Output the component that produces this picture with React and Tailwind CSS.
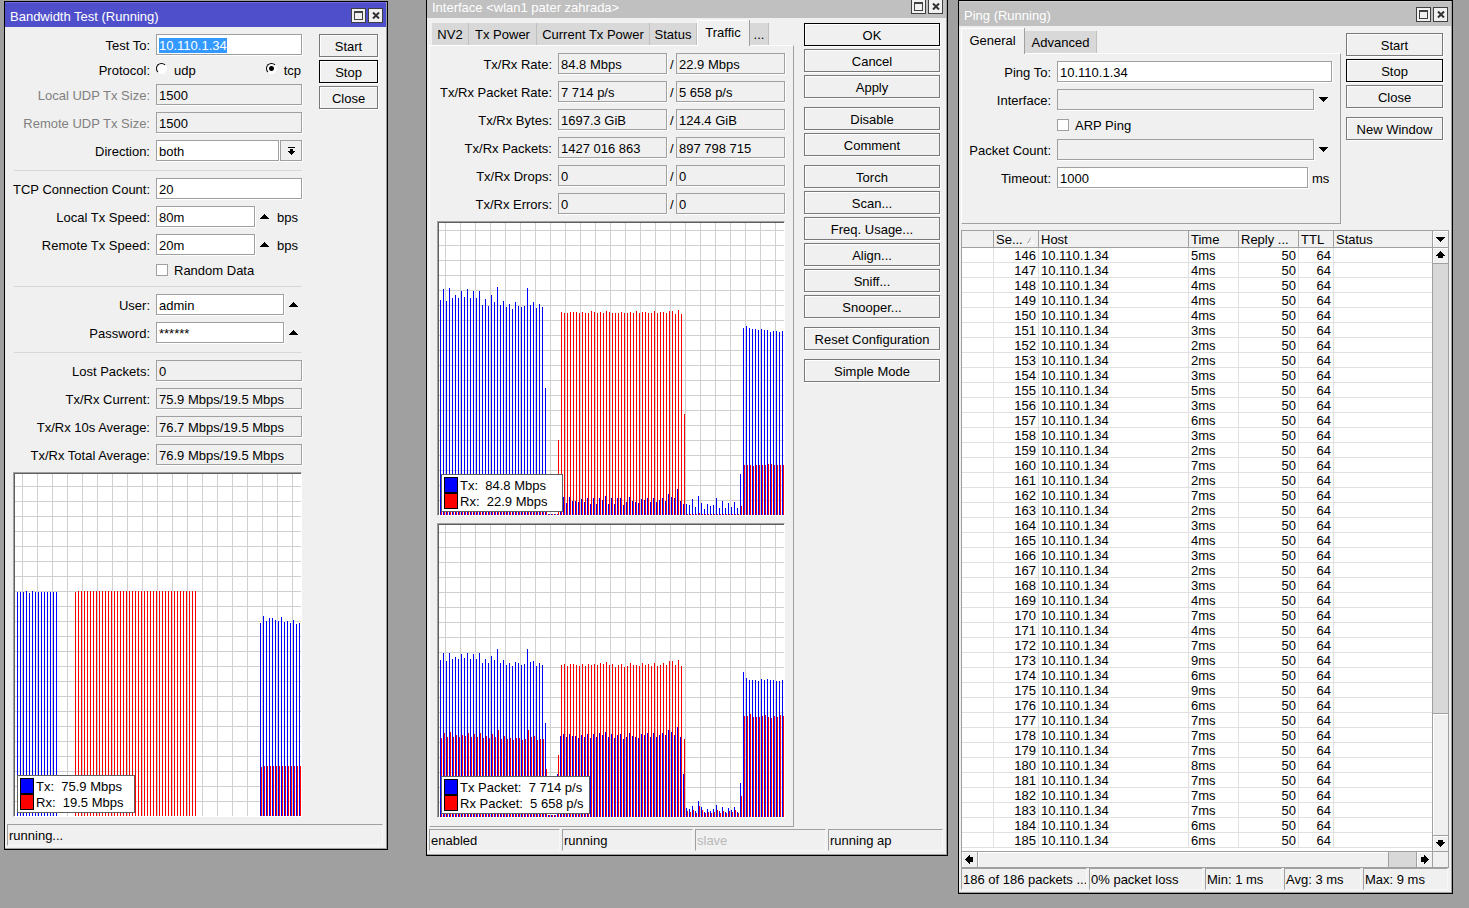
import { useEffect, useRef } from 'react';

const fill = (n, value) => Array(n).fill(value);

// one sample per second, values are bar heights in pixels
const bandwidthTx = [
    224, 224, 224, 225, 223, 225, ...fill(8, 224), ...fill(67, 0),
    193, 200, 195, 198, 198, 196, 195, 199, 194, 195, 193, 196, 192, 193,
];
const bandwidthRx = [...fill(19, 0), 224, ...fill(40, 225), ...fill(21, 0), 49, ...fill(13, 50)];

const rateTx = [
    215, 226, 214, 227, 217, 220, 217, 224, 218, 226, 217, 224, 217, 224, 210, 216, 209, 220, 213, 228,
    210, 214, 208, 211, 206, 213, 209, 208, 209, 227, 210, 213, 207, 211, 208, 127, 1, 1, 1, 1,
    13, 18, 12, 18, 14, 14, 13, 16, 13, 17, 11, 17, 11, 17, 15, 19, 11, 17, 11, 17, 17,
    10, 13, 18, 14, 13, 12, 16, 15, 17, 13, 17, 13, 15, 17, 14, 21, 18, 17, 26, 14,
    11, 11, 10, 16, 8, 19, 12, 6, 11, 9, 10, 17, 7, 14, 7, 12, 8, 13, 7, 41,
    187, 189, 187, 186, 186, 185, 186, 185, 185, 183, 184, 184, 183, 184,
];
const rateRx = [
    ...fill(36, 3), 1, 1, 1, 75,
    203, 202, 202, 203, 203, 203, 202, 203, 202, 202, 204, 203, 202, 203, 202, 204, 203, 202, 202, 202,
    203, 202, 202, 203, 202, 204, 202, 203, 203, 202, 202, 204, 202, 203, 203, 202, 204, 204, 201, 205,
    201, 101, ...fill(4, 1), 2, ...fill(13, 1), 9,
    50, 50, 50, 49, 50, 50, 50, 50, 51, 51, 50, 50, 50, 50,
];

const packetTx = [
    157, 164, 156, 164, 158, 160, 158, 163, 159, 164, 158, 163, 158, 164, 154, 158, 154, 161, 157, 168,
    154, 157, 152, 154, 151, 155, 154, 152, 153, 168, 155, 156, 151, 154, 152, 94, 2, 2, 2, 43,
    81, 83, 80, 83, 81, 81, 79, 82, 80, 83, 79, 83, 80, 84, 82, 85, 80, 83, 79, 82,
    83, 78, 80, 84, 81, 80, 79, 83, 82, 84, 80, 84, 80, 82, 84, 82, 87, 85, 82, 90,
    80, 43, 9, 8, 11, 6, 16, 10, 5, 8, 6, 8, 12, 6, 10, 5, 9, 7, 10, 5, 34,
    145, 139, 137, 137, 137, 136, 138, 137, 138, 137, 137, 136, 136, 137,
];
const packetRx = [
    79, 84, 80, 85, 80, 82, 80, 82, 81, 84, 80, 83, 80, 84, 79, 81, 79, 83, 80, 87,
    78, 81, 78, 79, 77, 79, 79, 77, 78, 87, 80, 81, 77, 78, 78, 48, 2, 2, 2, 62,
    152, 153, 151, 153, 153, 152, 151, 153, 151, 153, 152, 153, 152, 154, 153, 155, 152, 153, 150, 152,
    153, 150, 151, 154, 152, 152, 151, 154, 152, 153, 151, 154, 151, 152, 154, 152, 156, 156, 152, 157,
    151, 78, 6, 5, 7, 4, 11, 7, 4, 5, 4, 5, 7, 4, 6, 4, 6, 5, 7, 4, 21,
    101, 101, 103, 100, 100, 100, 101, 102, 100, 99, 101, 100, 102, 101,
];

// reply times in ms, starting with seq 146
const pingTimes = [
    5, 4, 4, 4, 4, 3, 2, 2, 3, 5, 3, 6, 3, 2, 7, 2, 7, 2, 3, 4,
    3, 2, 3, 4, 7, 4, 7, 9, 6, 9, 6, 7, 7, 7, 8, 7, 7, 7, 6, 6,
];

const Triangle = ({ down }) => (
    <svg width="9" height="5" viewBox="0 0 9 5" shapeRendering="crispEdges" aria-hidden="true">
        <path d={down ? 'M0 0h9v1H8v1H7v1H6v1H5v1H4V4H3V3H2V2H1V1H0z' : 'M0 5h9V4H8V3H7V2H6V1H5V0H4v1H3v1H2v1H1v1H0z'} />
    </svg>
);

const arrowPaths = {
    up: 'M4 0h1v1h1v1h1v1h1v1h1v1H7v2H2V5H0V4h1V3h1V2h1V1h1z',
    down: 'M4 8h1V7h1V6h1V5h1V4h1V3H7V1H2v2H0v1h1v1h1v1h1v1h1z',
    left: 'M0 4h1V3h1V2h1V1h1V0h1v2h3v5H5v2H4V8H3V7H2V6H1V5H0z',
    right: 'M9 4H8V3H7V2H6V1H5V0H4v2H1v5h3v2h1V8h1V7h1V6h1V5h1z',
};

const ScrollButton = ({ dir, className }) => (
    <button type="button" aria-label={`Scroll ${dir}`} className={`flex items-center justify-center bg-[#f0f0f0] border-[#a0a0a0] shadow-[inset_1px_1px_0_#fff] ${className}`}>
        <svg width="9" height="9" viewBox="0 0 9 9" shapeRendering="crispEdges" aria-hidden="true">
            <path d={arrowPaths[dir]} />
        </svg>
    </button>
);

const ArrowButton = ({ down, label }) => (
    <button type="button" aria-label={label} className="flex h-[21px] w-[18px] items-center justify-center">
        <Triangle down={down} />
    </button>
);

const Window = ({ title, active, className, children }) => (
    <section className={`absolute border border-black bg-[#f0f0f0] shadow-[inset_-1px_-1px_0_#a0a0a0] ${className}`}>
        <header className={`flex h-[25px] items-center gap-[2px] border-t pl-[5px] pr-[3px] mr-px text-white ${active ? 'bg-[#4f4fcc] border-[#6c6ce0]' : 'bg-[#c0c0c0] border-[#d0d0d0]'}`}>
            <h2 className="flex-1 pt-[3px]">{title}</h2>
            <button type="button" aria-label="Maximize" className="flex h-[15px] w-[15px] items-center justify-center border border-[#404040] bg-[#f0f0f0]">
                <svg width="9" height="9" viewBox="0 0 9 9" shapeRendering="crispEdges">
                    <path d="M0 0h9v9H0zM1 2v6h7V2z" fillRule="evenodd" fill="#404040" />
                </svg>
            </button>
            <button type="button" aria-label="Close window" className="flex h-[15px] w-[15px] items-center justify-center border border-[#404040] bg-[#f0f0f0]">
                <svg width="8" height="7" viewBox="0 0 8 7">
                    <path d="M1 0.5l6 6M7 0.5l-6 6" stroke="#303030" strokeWidth="2" />
                </svg>
            </button>
        </header>
        {children}
    </section>
);

const Button = ({ children, strong }) => (
    <button type="button" className={`flex h-[23px] w-full items-center justify-center border bg-[#f0f0f0] pt-[2px] shadow-[inset_1px_1px_0_#fff,1px_1px_0_#fff] ${strong ? 'border-black' : 'border-[#787878]'}`}>
        {children}
    </button>
);

const Row = ({ id, label, labelClass, dim, children }) => (
    <div className="flex h-[21px] items-center">
        <label htmlFor={id} className={`mr-[6px] shrink-0 whitespace-nowrap pt-[2px] text-right ${labelClass} ${dim ? 'text-[#808080]' : ''}`}>{label}</label>
        {children}
    </div>
);

const fieldBase = 'h-[21px] min-w-0 rounded-none border border-[#a0a0a0] px-[2px] pt-[2px] leading-[17px] outline-none shadow-[1px_1px_0_#fff]';

const Field = ({ className = 'flex-1', gray, ...props }) => (
    <input type="text" readOnly={gray} className={`${fieldBase} ${gray ? 'bg-[#f0f0f0]' : 'bg-white'} ${className}`} {...props} />
);

const CheckRow = ({ id, label, className }) => (
    <div className={`flex h-[15px] items-center gap-[6px] ${className}`}>
        <input id={id} type="checkbox" className="h-[12px] w-[12px] appearance-none border border-[#a0a0a0] bg-white checked:bg-black" />
        <label htmlFor={id} className="pt-[2px]">{label}</label>
    </div>
);

const Divider = () => <hr className="ml-px h-[3px] border-t-0 border-b border-[#d8d8d8]" />;

const StatusCell = ({ className, children }) => (
    <div className={`h-[22px] overflow-hidden whitespace-nowrap border border-[#f8f8f8] border-l-[#a0a0a0] border-t-[#a0a0a0] pl-px leading-[22px] ${className}`}>{children}</div>
);

const Chart = ({ width, height, tx, rx, legend, legendClass }) => {
    const start = width - tx.length * 3 + 1;
    const columns = Array.from({ length: Math.ceil((width - 9) / 15) }, (_, i) => width - 9 - i * 15);
    const lines = Array.from({ length: Math.floor(height / 15) }, (_, i) => height - (i + 1) * 15);

    return (
        <div className="relative self-start border border-l-[#a0a0a0] border-t-[#a0a0a0] border-r-white border-b-white">
            <div className="border-l border-t border-[#606060] bg-white">
                <svg className="block" width={width} height={height} viewBox={`0 0 ${width} ${height}`} shapeRendering="crispEdges">
                    {columns.map((x) => <rect key={x} x={x} y="0" width="1" height={height} fill="#d0d0d0" />)}
                    {lines.map((y) => <rect key={y} x="0" y={y} width={width} height="1" fill="#d0d0d0" />)}
                    {tx.map((h, i) => <rect key={i} x={start + i * 3} y={height - h} width="1" height={h} fill="#0000ff" />)}
                    {rx.map((h, i) => <rect key={i} x={start + i * 3 + 1} y={height - h} width="1" height={h} fill="#ff0000" />)}
                </svg>
            </div>
            <ul className={`absolute bottom-[3px] left-[3px] border border-[#606060] bg-white py-[2px] pl-[2px] ${legendClass}`}>
                {legend.map(([name, value], i) => (
                    <li key={name} className="flex h-[16px] items-center gap-[2px] whitespace-pre">
                        <span className={`h-[16px] w-[14px] shrink-0 border border-black ${i ? 'bg-[#ff0000]' : 'bg-[#0000ff]'}`} />
                        <span>{name}:  {value}</span>
                    </li>
                ))}
            </ul>
        </div>
    );
};

const BandwidthTest = () => {
    const target = useRef(null);

    useEffect(() => {
        target.current.focus();
        target.current.select();
    }, []);

    const label = 'w-[137px]';

    return (
        <Window title="Bandwidth Test (Running)" active className="left-[4px] top-px w-[384px]">
            <div className="flex justify-between pl-[8px] pr-[9px] pt-[7px]">
                <div className="flex w-[289px] flex-col gap-[7px]">
                    <Row id="bt-to" label="Test To:" labelClass={label}>
                        <input id="bt-to" ref={target} type="text" defaultValue="10.110.1.34" className={`${fieldBase} flex-1 bg-white selection:bg-[#3399ff] selection:text-white`} />
                    </Row>
                    <div className="flex h-[15px] items-center" role="radiogroup" aria-labelledby="bt-protocol">
                        <span id="bt-protocol" className="mr-[6px] w-[137px] pt-[2px] text-right">Protocol:</span>
                        <div className="flex flex-1 justify-between pr-px">
                            {['udp', 'tcp'].map((name) => (
                                <label key={name} className="flex items-center gap-[7px]">
                                    <input type="radio" name="protocol" defaultChecked={name === 'tcp'} className="mb-[2px] h-[11px] w-[11px] appearance-none rounded-full border border-white border-l-black border-t-black bg-white checked:bg-[radial-gradient(circle,#000_2px,#fff_3px)]" />
                                    <span className="pt-[2px]">{name}</span>
                                </label>
                            ))}
                        </div>
                    </div>
                    <Row id="bt-local-size" label="Local UDP Tx Size:" labelClass={label} dim><Field id="bt-local-size" gray defaultValue="1500" /></Row>
                    <Row id="bt-remote-size" label="Remote UDP Tx Size:" labelClass={label} dim><Field id="bt-remote-size" gray defaultValue="1500" /></Row>
                    <Row id="bt-direction" label="Direction:" labelClass={label}>
                        <select id="bt-direction" className={`${fieldBase} mr-px flex-1 appearance-none bg-white`}>
                            <option>both</option>
                            <option>send</option>
                            <option>receive</option>
                        </select>
                        <button type="button" aria-label="Open direction list" className="flex h-[21px] w-[22px] items-center justify-center border border-[#a0a0a0] shadow-[1px_1px_0_#fff]">
                            <svg width="7" height="8" viewBox="0 0 7 8" shapeRendering="crispEdges">
                                <path d="M0 0h7v1H0zM2 2h3v2h2v1H6v1H5v1H4v1H3V7H2V6H1V5H0V4h2z" />
                            </svg>
                        </button>
                    </Row>
                    <Divider />
                    <Row id="bt-count" label="TCP Connection Count:" labelClass={label}><Field id="bt-count" defaultValue="20" /></Row>
                    <Row id="bt-local-speed" label="Local Tx Speed:" labelClass={label}>
                        <Field id="bt-local-speed" className="w-[99px]" defaultValue="80m" />
                        <ArrowButton label="Clear local speed" />
                        <span className="pl-[4px] pt-[2px]">bps</span>
                    </Row>
                    <Row id="bt-remote-speed" label="Remote Tx Speed:" labelClass={label}>
                        <Field id="bt-remote-speed" className="w-[99px]" defaultValue="20m" />
                        <ArrowButton label="Clear remote speed" />
                        <span className="pl-[4px] pt-[2px]">bps</span>
                    </Row>
                    <CheckRow id="bt-random" label="Random Data" className="pl-[143px]" />
                    <Divider />
                    <Row id="bt-user" label="User:" labelClass={label}>
                        <Field id="bt-user" defaultValue="admin" />
                        <ArrowButton label="Clear user" />
                    </Row>
                    <Row id="bt-password" label="Password:" labelClass={label}>
                        <Field id="bt-password" defaultValue="******" />
                        <ArrowButton label="Clear password" />
                    </Row>
                    <Divider />
                    <Row id="bt-lost" label="Lost Packets:" labelClass={label}><Field id="bt-lost" gray defaultValue="0" /></Row>
                    <Row id="bt-current" label="Tx/Rx Current:" labelClass={label}><Field id="bt-current" gray defaultValue="75.9 Mbps/19.5 Mbps" /></Row>
                    <Row id="bt-10s" label="Tx/Rx 10s Average:" labelClass={label}><Field id="bt-10s" gray defaultValue="76.7 Mbps/19.5 Mbps" /></Row>
                    <Row id="bt-total" label="Tx/Rx Total Average:" labelClass={label}><Field id="bt-total" gray defaultValue="76.9 Mbps/19.5 Mbps" /></Row>
                    <Chart width={286} height={342} tx={bandwidthTx} rx={bandwidthRx} legend={[['Tx', '75.9 Mbps'], ['Rx', '19.5 Mbps']]} legendClass="w-[118px]" />
                </div>
                <div className="flex w-[59px] flex-col gap-[3px]">
                    <Button>Start</Button>
                    <Button strong>Stop</Button>
                    <Button>Close</Button>
                </div>
            </div>
            <div className="mt-[7px] pb-[3px] pl-[2px] pr-[4px]">
                <StatusCell>running...</StatusCell>
            </div>
        </Window>
    );
};

const Tab = ({ active, className = '', children }) => (
    <button
        type="button"
        role="tab"
        aria-selected={!!active}
        className={`border-r whitespace-nowrap text-center ${active ? 'relative -mb-px h-[26px] border-[#a0a0a0] bg-[#f0f0f0] pb-[2px] shadow-[inset_1px_1px_0_#fff]' : 'h-[22px] border-[#c0c0c0] bg-[#d8d8d8]'} ${className}`}
    >
        {children}
    </button>
);

const panel = 'border border-l-white border-t-white border-r-[#a0a0a0] border-b-[#a0a0a0]';

const trafficRows = [
    ['Tx/Rx Rate:', '84.8 Mbps', '22.9 Mbps'],
    ['Tx/Rx Packet Rate:', '7 714 p/s', '5 658 p/s'],
    ['Tx/Rx Bytes:', '1697.3 GiB', '124.4 GiB'],
    ['Tx/Rx Packets:', '1427 016 863', '897 798 715'],
    ['Tx/Rx Drops:', '0', '0'],
    ['Tx/Rx Errors:', '0', '0'],
];

const actionGroups = [
    ['OK', 'Cancel', 'Apply'],
    ['Disable', 'Comment'],
    ['Torch', 'Scan...', 'Freq. Usage...', 'Align...', 'Sniff...', 'Snooper...'],
    ['Reset Configuration'],
    ['Simple Mode'],
];

const InterfaceWindow = () => (
    <Window title="Interface <wlan1 pater zahrada>" className="left-[426px] -top-[8px] w-[522px]">
        <div className="flex justify-between pl-[2px] pr-[7px]">
            <div className="w-[365px]">
                <div role="tablist" className="flex h-[27px] items-end pl-[3px]">
                    <Tab className="w-[37px]">NV2</Tab>
                    <Tab className="w-[68px]">Tx Power</Tab>
                    <Tab className="w-[113px]">Current Tx Power</Tab>
                    <Tab className="w-[47px]">Status</Tab>
                    <Tab active className="w-[53px]">Traffic</Tab>
                    <Tab className="w-[19px]">...</Tab>
                </div>
                <div className={`flex flex-col gap-[7px] pb-[8px] pl-[7px] pr-[8px] pt-[7px] ${panel}`}>
                    {trafficRows.map(([label, tx, rx], i) => (
                        <Row key={label} id={`if-${i}`} label={label} labelClass="w-[115px]">
                            <Field id={`if-${i}`} gray className="w-[109px]" defaultValue={tx} />
                            <span className="w-[9px] pl-[3px] pt-[2px]">/</span>
                            <Field gray aria-label={`${label} received`} className="w-[109px]" defaultValue={rx} />
                        </Row>
                    ))}
                    <Chart width={345} height={292} tx={rateTx} rx={rateRx} legend={[['Tx', '84.8 Mbps'], ['Rx', '22.9 Mbps']]} legendClass="w-[122px]" />
                    <Chart width={345} height={292} tx={packetTx} rx={packetRx} legend={[['Tx Packet', '7 714 p/s'], ['Rx Packet', '5 658 p/s']]} legendClass="w-[149px]" />
                </div>
            </div>
            <div className="flex w-[136px] flex-col gap-[9px] pt-[5px]">
                {actionGroups.map((group) => (
                    <div key={group[0]} className="flex flex-col gap-[3px]">
                        {group.map((name) => <Button key={name} strong={name === 'OK'}>{name}</Button>)}
                    </div>
                ))}
            </div>
        </div>
        <div className="mt-[2px] flex gap-[2px] pb-[4px] pl-[2px] pr-[4px]">
            <StatusCell className="w-[131px]">enabled</StatusCell>
            <StatusCell className="w-[131px]">running</StatusCell>
            <StatusCell className="w-[131px] text-[#b8b8b8]">slave</StatusCell>
            <StatusCell className="flex-1">running ap</StatusCell>
        </div>
    </Window>
);

const cell = 'border-b border-r border-[#e0e0e0] p-0 pt-[2px] leading-[12px]';
const headCell = 'border-b border-r border-[#a0a0a0] p-0 pl-[2px] pt-[2px] text-left font-normal leading-[14px] whitespace-nowrap';

const PingTable = () => (
    <div className="ml-[2px] mr-[3px] mt-[6px] flex border border-[#a0a0a0] bg-white">
        <div className="flex min-w-0 flex-1 flex-col">
            <table className="w-full table-fixed border-separate border-spacing-0">
                <thead>
                    <tr className="h-[17px] bg-[#f0f0f0]">
                        <th className={`w-[32px] ${headCell}`} aria-label="Flags" />
                        <th className={`w-[45px] ${headCell}`}>
                            <span className="flex items-center justify-between pr-[4px]">
                                Se...
                                <svg width="7" height="7" viewBox="0 0 7 7"><path d="M0.5 6.5L4 0.5" stroke="#a0a0a0" /><path d="M4 0.5L6.5 6.5H1" stroke="#fff" fill="none" /></svg>
                            </span>
                        </th>
                        <th className={`w-[150px] ${headCell}`}>Host</th>
                        <th className={`w-[50px] ${headCell}`}>Time</th>
                        <th className={`w-[60px] ${headCell}`}>Reply ...</th>
                        <th className={`w-[35px] ${headCell}`}>TTL</th>
                        <th className={`${headCell} border-r-0`}>Status</th>
                    </tr>
                </thead>
                <tbody>
                    {pingTimes.map((time, i) => (
                        <tr key={i} className="h-[15px]">
                            <td className={cell} />
                            <td className={`${cell} pr-[2px] text-right`}>{146 + i}</td>
                            <td className={`${cell} pl-[2px]`}>10.110.1.34</td>
                            <td className={`${cell} pl-[2px]`}>{time}ms</td>
                            <td className={`${cell} pr-[2px] text-right`}>50</td>
                            <td className={`${cell} pr-[2px] text-right`}>64</td>
                            <td className={`${cell} border-r-0`} />
                        </tr>
                    ))}
                </tbody>
            </table>
            <div className="mt-[3px] flex h-[16px] border-t border-[#a0a0a0] bg-[#d8d8d8]">
                <ScrollButton dir="left" className="w-[16px] border-r" />
                <div className="flex-1 pr-[27px]">
                    <div className="h-full border-r border-[#a0a0a0] bg-[#f0f0f0] shadow-[inset_1px_1px_0_#fff]" />
                </div>
                <ScrollButton dir="right" className="w-[16px] border-l" />
            </div>
        </div>
        <div className="flex w-[16px] flex-col border-l border-[#a0a0a0] bg-[#d8d8d8]">
            <button type="button" aria-label="Choose columns" className="flex h-[17px] items-center justify-center border-b border-[#a0a0a0] bg-[#f0f0f0] shadow-[inset_1px_1px_0_#fff]">
                <Triangle down />
            </button>
            <ScrollButton dir="up" className="h-[16px] border-b" />
            <div className="flex flex-1 flex-col justify-end">
                <div className="h-[122px] border-t border-[#a0a0a0] bg-[#f0f0f0] shadow-[inset_1px_1px_0_#fff]" />
            </div>
            <ScrollButton dir="down" className="h-[16px] border-t" />
            <div className="h-[16px] border-t border-[#a0a0a0] bg-[#f0f0f0]" />
        </div>
    </div>
);

const PingWindow = () => {
    const label = 'w-[89px]';

    return (
        <Window title="Ping (Running)" className="left-[958px] top-0 w-[495px]">
            <div className="flex justify-between pl-[2px] pr-[9px]">
                <div className="w-[380px]">
                    <div role="tablist" className="flex h-[27px] items-end">
                        <Tab active className="w-[64px]">General</Tab>
                        <Tab className="w-[72px]">Advanced</Tab>
                    </div>
                    <div className={`flex flex-col gap-[7px] pb-[35px] pr-[8px] pt-[7px] ${panel}`}>
                        <Row id="ping-to" label="Ping To:" labelClass={label}><Field id="ping-to" defaultValue="10.110.1.34" /></Row>
                        <Row id="ping-interface" label="Interface:" labelClass={label}>
                            <select id="ping-interface" className={`${fieldBase} flex-1 appearance-none bg-[#f0f0f0]`}><option value="" /></select>
                            <ArrowButton down label="Open interface list" />
                        </Row>
                        <CheckRow id="ping-arp" label="ARP Ping" className="pl-[95px]" />
                        <Row id="ping-count" label="Packet Count:" labelClass={label}>
                            <Field id="ping-count" gray />
                            <ArrowButton down label="Set packet count" />
                        </Row>
                        <Row id="ping-timeout" label="Timeout:" labelClass={label}>
                            <Field id="ping-timeout" defaultValue="1000" />
                            <span className="w-[24px] pl-[4px] pt-[2px]">ms</span>
                        </Row>
                    </div>
                </div>
                <div className="flex w-[97px] flex-col gap-[9px] pt-[7px]">
                    <div className="flex flex-col gap-[3px]">
                        <Button>Start</Button>
                        <Button strong>Stop</Button>
                        <Button>Close</Button>
                    </div>
                    <Button>New Window</Button>
                </div>
            </div>
            <PingTable />
            <div className="flex gap-[2px] pb-[3px] pl-[2px] pr-[4px]">
                <StatusCell className="w-[126px]">186 of 186 packets ...</StatusCell>
                <StatusCell className="w-[114px]">0% packet loss</StatusCell>
                <StatusCell className="w-[77px]">Min: 1 ms</StatusCell>
                <StatusCell className="w-[77px]">Avg: 3 ms</StatusCell>
                <StatusCell className="flex-1">Max: 9 ms</StatusCell>
            </div>
        </Window>
    );
};

const App = () => (
    <main className="relative min-h-screen overflow-hidden bg-[#a0a0a0] font-['Liberation_Sans',Arial,sans-serif] text-[13px] leading-[15px] text-black">
        <BandwidthTest />
        <InterfaceWindow />
        <PingWindow />
    </main>
);

export default App;
